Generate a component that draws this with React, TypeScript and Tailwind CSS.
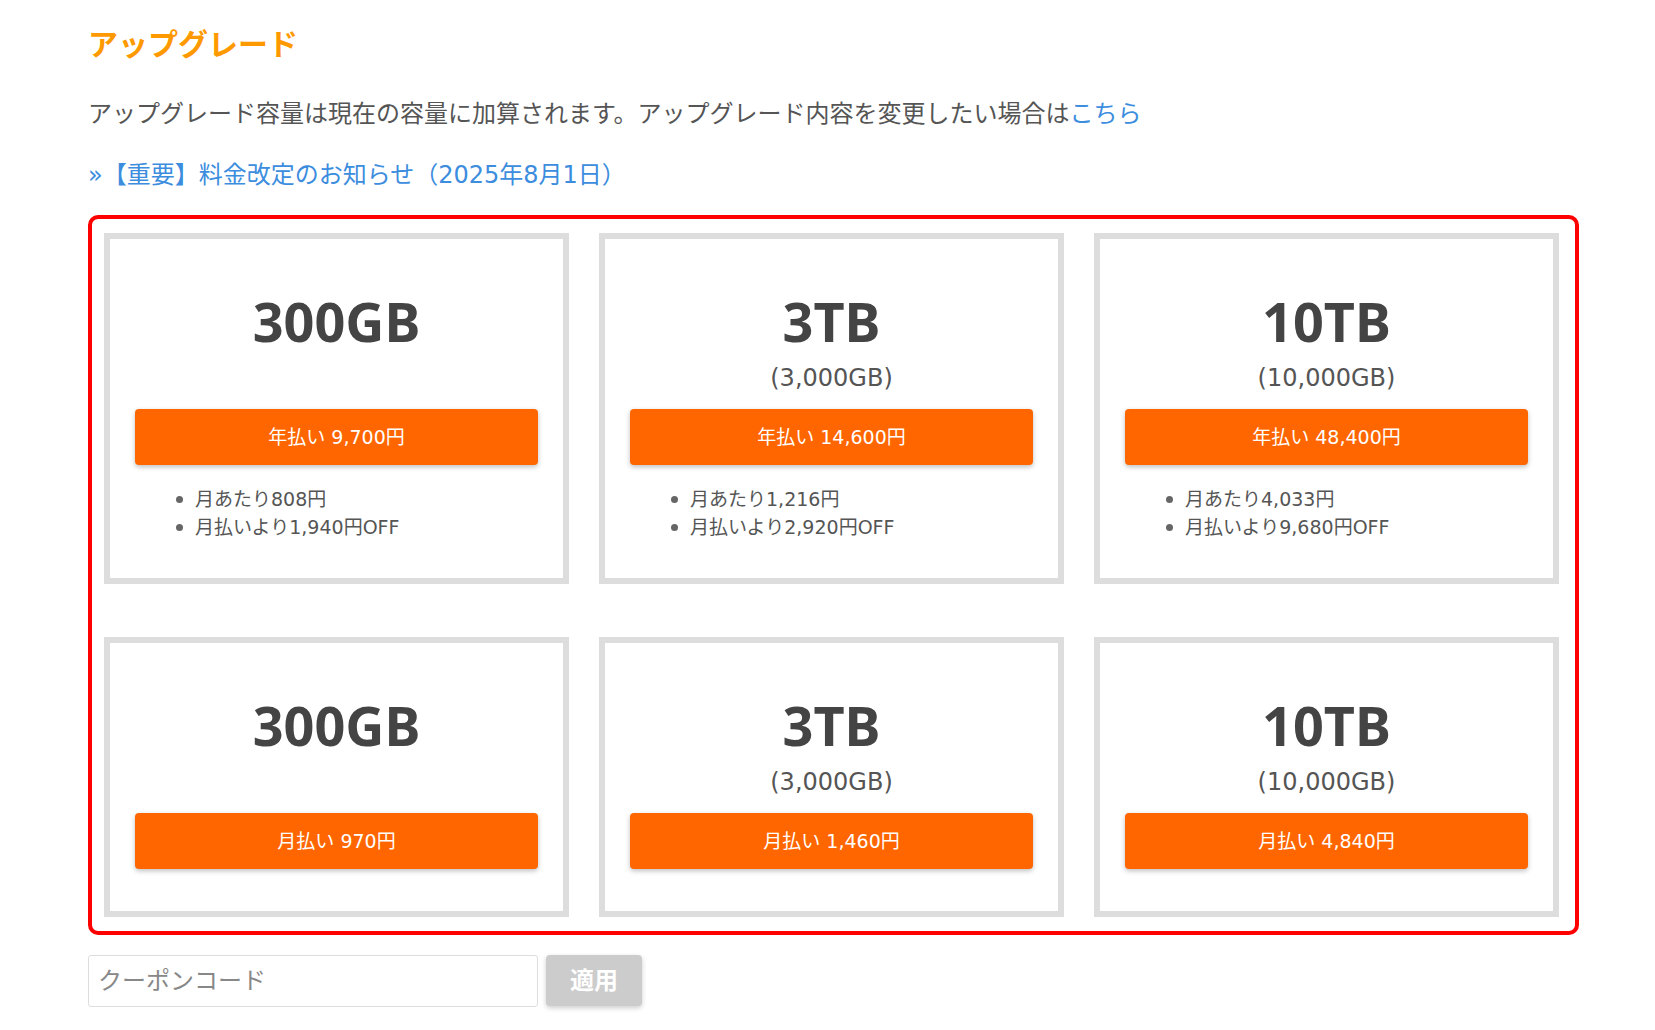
import React from "react";

type Plan = { size: string; sub?: string; label: string; bullets?: string[] };

const plans: Plan[] = [
  { size: "300GB", label: "年払い 9,700円", bullets: ["月あたり808円", "月払いより1,940円OFF"] },
  { size: "3TB", sub: "(3,000GB)", label: "年払い 14,600円", bullets: ["月あたり1,216円", "月払いより2,920円OFF"] },
  { size: "10TB", sub: "(10,000GB)", label: "年払い 48,400円", bullets: ["月あたり4,033円", "月払いより9,680円OFF"] },
  { size: "300GB", label: "月払い 970円" },
  { size: "3TB", sub: "(3,000GB)", label: "月払い 1,460円" },
  { size: "10TB", sub: "(10,000GB)", label: "月払い 4,840円" },
];

const font = { fontFamily: '"DejaVu Sans", "Noto Sans CJK JP", sans-serif' };
const boldFont = { fontFamily: '"Noto Sans", "Noto Sans CJK JP", sans-serif' };

function Card({ p }: { p: Plan }) {
  return (
    <div
      className={
        "border-[6px] border-[#dddddd] bg-white px-[25px] pt-[52px] flex flex-col " +
        (p.bullets ? "pb-[37px]" : "pb-[42px]")
      }
    >
      <div className="text-center text-[54px] leading-[60px] font-bold text-[#444444]" style={boldFont}>
        {p.size}
      </div>
      <div className="text-center text-[24px] leading-[34px] h-[34px] mt-[10px] text-[#555555]">{p.sub ?? ""}</div>
      <button
        className="mt-[14px] h-[56px] w-full rounded-[4px] bg-[#ff6600] text-white text-[19px] shadow-[0_2px_5px_rgba(0,0,0,0.25)]"
        style={font}
      >
        {p.label}
      </button>
      {p.bullets && (
        <ul className="mt-[20px] pl-[41px]">
          {p.bullets.map((b) => (
            <li key={b} className="flex items-center text-[19px] leading-[28px] text-[#555555]">
              <span className="inline-block w-[7px] h-[7px] rounded-full bg-[#666666] mr-[12px]" />
              {b}
            </li>
          ))}
        </ul>
      )}
    </div>
  );
}

export default function App() {
  return (
    <div className="min-h-[1030px] w-[1655px] bg-white pt-[25px] pl-[88px]" style={font}>
      <h1 className="text-[30px] leading-[40px] font-bold text-[#ff9900]">アップグレード</h1>
      <p className="mt-[31px] text-[24px] leading-[36px] text-[#555555]">
        アップグレード容量は現在の容量に加算されます。アップグレード内容を変更したい場合は
        <a className="text-[#3c8dde]">こちら</a>
      </p>
      <p className="mt-[25px] mb-[2px] text-[24px] leading-[36px] text-[#3c8dde]">»【重要】料金改定のお知らせ（2025年8月1日）</p>
      <div className="mt-[22px] w-[1491px] border-4 border-[#ff0000] rounded-[10px] pt-[14px] pb-[14px] pl-[12px] pr-[16px]">
        <div className="grid grid-cols-3 gap-x-[30px] gap-y-[53px]">
          {plans.map((p, i) => (
            <Card key={i} p={p} />
          ))}
        </div>
      </div>
      <div className="mt-[20px] flex items-start gap-[8px]">
        <input
          placeholder="クーポンコード"
          className="w-[450px] h-[52px] border border-[#dddddd] rounded-[3px] px-[9px] text-[24px] placeholder:text-[#888888] outline-none"
          style={font}
        />
        <button className="w-[96px] h-[51px] rounded-[4px] bg-[#cccccc] text-white font-bold text-[24px] shadow-[0_2px_5px_rgba(0,0,0,0.2)]">
          適用
        </button>
      </div>
    </div>
  );
}
